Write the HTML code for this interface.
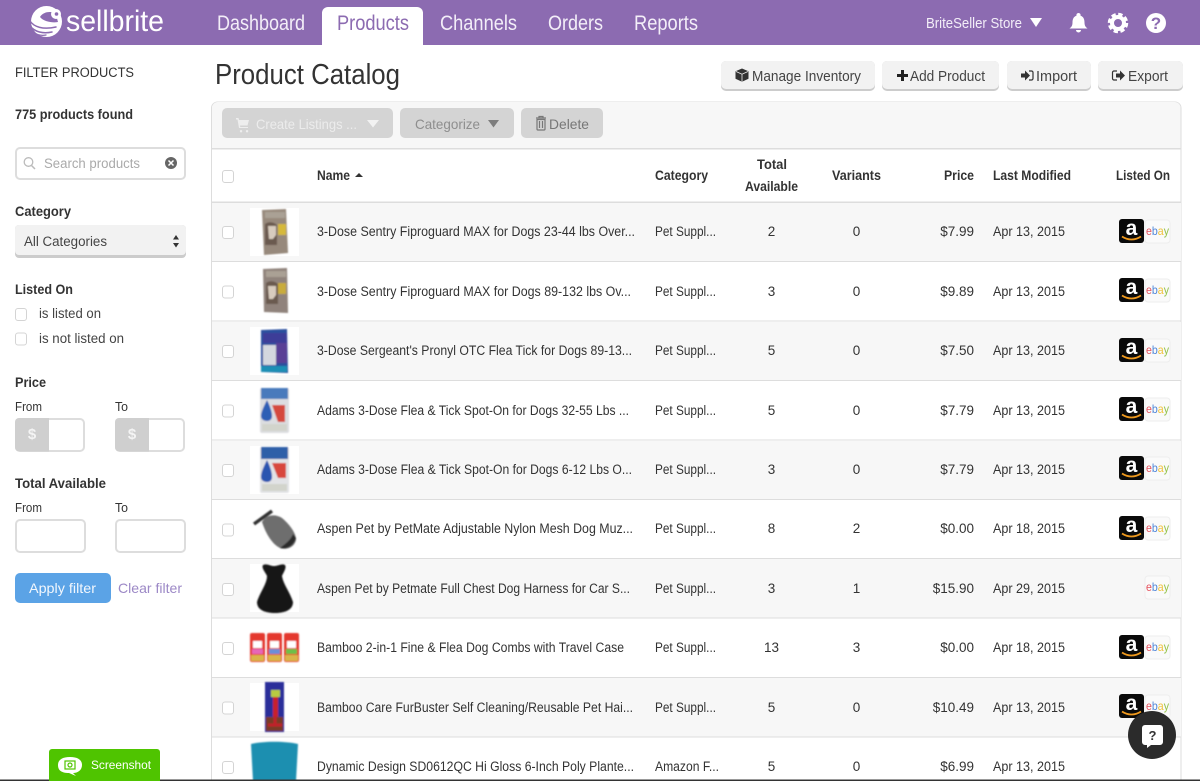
<!DOCTYPE html>
<html lang="en"><head><meta charset="utf-8"><title>Sellbrite Product Catalog</title>
<style>
html,body{margin:0;padding:0;background:#fff;width:1200px;height:781px;overflow:hidden}
svg{display:block;position:absolute;left:0;top:0;filter:blur(.3px)}
text{font-family:"Liberation Sans",sans-serif;font-size:13.5px;fill:#333}
.b{font-weight:bold}
.n{font-size:13.5px;fill:#333}
.c{text-anchor:middle}
.r{text-anchor:end}
.nav{font-size:21px;fill:#f3eef8}
.btn{font-size:14.5px;fill:#444}
</style></head><body>
<svg width="1200" height="781" viewBox="0 0 1200 781" xmlns="http://www.w3.org/2000/svg">
<defs>
<filter id="bl" x="-10%" y="-10%" width="120%" height="120%"><feGaussianBlur stdDeviation="0.7"/></filter>
<g id="az"><rect x="0" y="0" width="25" height="24" rx="3" fill="#0a0a0a"/><text x="12.500" y="16" style="font-size:21px;font-weight:bold;fill:#fff;text-anchor:middle">a</text><path d="M3 17.500c6 4 13 4 19 0" fill="none" stroke="#f09a1e" stroke-width="1.800"/></g>
<g id="eb"><rect x="0" y="0" width="25" height="23" rx="3" fill="#fafafa" stroke="#eee" stroke-width="1"/><text x="1" y="15" style="font-size:12px" textLength="23" lengthAdjust="spacingAndGlyphs"><tspan style="fill:#e5505c">e</tspan><tspan style="fill:#4f86d8">b</tspan><tspan style="fill:#efc23a">a</tspan><tspan style="fill:#94c24a">y</tspan></text></g>
</defs>

<rect width="1200" height="781" fill="#fff"/>
<!-- header -->
<rect width="1200" height="45" fill="#8c6bb1"/>
<circle cx="46.500" cy="21.500" r="15.500" fill="#fff"/>
<path d="M40 17c3-5 10-6 14-4c3 2 3 6 4 9c-5 1-14 0-18-5z" fill="#8c6bb1"/>
<g fill="none" stroke="#8c6bb1" stroke-linecap="round">
<path d="M30 21c4 6 13 9 26 6" stroke-width="1.500"/>
<path d="M30 26c5 6 13 8 22 6" stroke-width="1.500"/>
<path d="M33 32c4 3 8 4 13 3" stroke-width="1.300"/>
</g>
<circle cx="56" cy="14" r="5" fill="#fff"/><circle cx="56.500" cy="14" r="1.800" fill="#8c6bb1"/>
<text x="66" y="31" textLength="98" lengthAdjust="spacingAndGlyphs" style="font-size:30px;fill:#fff">sellbrite</text>
<text class="nav" x="217" y="30" textLength="88" lengthAdjust="spacingAndGlyphs">Dashboard</text>
<path d="M322 45V13a6 6 0 0 1 6-6h89a6 6 0 0 1 6 6v32z" fill="#fff"/>
<text class="nav" x="337" y="30" textLength="72" lengthAdjust="spacingAndGlyphs" style="fill:#8c6bb1">Products</text>
<text class="nav" x="440" y="30" textLength="77" lengthAdjust="spacingAndGlyphs">Channels</text>
<text class="nav" x="548" y="30" textLength="55" lengthAdjust="spacingAndGlyphs">Orders</text>
<text class="nav" x="634" y="30" textLength="64" lengthAdjust="spacingAndGlyphs">Reports</text>
<text x="926" y="28" textLength="96" lengthAdjust="spacingAndGlyphs" style="font-size:14.500px;fill:#f3eef8">BriteSeller Store</text>
<path d="M1030 18h12l-6 9z" fill="#fff"/>
<path d="M1078.500 13a2 2 0 0 1 2 2.600c3 1 4 3.800 4 6.900c0 3 1 4.500 3 6h-18c2-1.500 3-3 3-6c0-3.100 1-5.900 4-6.900a2 2 0 0 1 2-2.600zM1076 30h5a2.500 2.500 0 0 1-5 0z" fill="#fff"/>
<circle cx="1118" cy="23" r="6" fill="none" stroke="#fff" stroke-width="4"/>
<circle cx="1118" cy="23" r="8.500" fill="none" stroke="#fff" stroke-width="3.500" stroke-dasharray="4.200 2.470"/>
<circle cx="1156" cy="23" r="10" fill="#fff"/>
<text x="1156" y="29" class="c b" style="font-size:17px;fill:#8c6bb1">?</text>

<!-- sidebar -->
<text x="15" y="77" textLength="119" lengthAdjust="spacingAndGlyphs">FILTER PRODUCTS</text>
<text class="b" x="15" y="119" textLength="118" lengthAdjust="spacingAndGlyphs">775 products found</text>
<rect x="16" y="148" width="169" height="31" rx="4" fill="#fff" stroke="#ddd" stroke-width="2"/>
<circle cx="28.500" cy="162" r="4.300" fill="none" stroke="#bbb" stroke-width="1.300"/><path d="M31.500 165.500l3.500 3.500" stroke="#bbb" stroke-width="1.500"/>
<text x="44" y="168" textLength="96" lengthAdjust="spacingAndGlyphs" style="fill:#aaa">Search products</text>
<circle cx="171" cy="163" r="6" fill="#666"/><path d="M168.500 160.500l5 5m0-5l-5 5" stroke="#fff" stroke-width="1.500"/>
<text class="b" x="15" y="216" textLength="56" lengthAdjust="spacingAndGlyphs">Category</text>
<rect x="15" y="225" width="171" height="33" rx="4" fill="#ccc"/>
<rect x="15" y="225" width="171" height="30" rx="4" fill="#f2f2f2"/>
<text x="24" y="246" textLength="83" lengthAdjust="spacingAndGlyphs" style="fill:#444">All Categories</text>
<path d="M173 239.500l3-4.500 3 4.500zM173 243h6l-3 4.500z" fill="#333"/>
<text class="b" x="15" y="294" textLength="58" lengthAdjust="spacingAndGlyphs">Listed On</text>
<rect x="15.500" y="308.500" width="11" height="12" rx="2.500" fill="#fff" stroke="#d4d4d4"/>
<rect x="15.500" y="333" width="11" height="12" rx="2.500" fill="#fff" stroke="#d4d4d4"/>
<text x="39" y="318" textLength="62" lengthAdjust="spacingAndGlyphs" style="fill:#444">is listed on</text>
<text x="39" y="343" textLength="85" lengthAdjust="spacingAndGlyphs" style="fill:#444">is not listed on</text>
<text class="b" x="15" y="387" textLength="31" lengthAdjust="spacingAndGlyphs">Price</text>
<text x="15" y="411" textLength="27" lengthAdjust="spacingAndGlyphs" style="font-size:12.500px">From</text>
<text x="115" y="411" textLength="13" lengthAdjust="spacingAndGlyphs" style="font-size:12.500px">To</text>
<rect x="16" y="419" width="68" height="32" rx="4" fill="#fff" stroke="#ddd" stroke-width="2"/>
<path d="M19 418h30v33.500H19a4 4 0 0 1-4-4V422a4 4 0 0 1 4-4z" fill="#cfcfcf"/>
<text x="32" y="439" class="c" style="fill:#f4f4f4;font-size:15px;font-weight:bold">$</text>
<rect x="116" y="419" width="68" height="32" rx="4" fill="#fff" stroke="#ddd" stroke-width="2"/>
<path d="M119 418h30v33.500h-30a4 4 0 0 1-4-4V422a4 4 0 0 1 4-4z" fill="#cfcfcf"/>
<text x="132" y="439" class="c" style="fill:#f4f4f4;font-size:15px;font-weight:bold">$</text>
<text class="b" x="15" y="488" textLength="91" lengthAdjust="spacingAndGlyphs">Total Available</text>
<text x="15" y="512" textLength="27" lengthAdjust="spacingAndGlyphs" style="font-size:12.500px">From</text>
<text x="115" y="512" textLength="13" lengthAdjust="spacingAndGlyphs" style="font-size:12.500px">To</text>
<rect x="16" y="520" width="69" height="32" rx="4" fill="#fff" stroke="#ddd" stroke-width="2"/>
<rect x="116" y="520" width="69" height="32" rx="4" fill="#fff" stroke="#ddd" stroke-width="2"/>
<rect x="15" y="573" width="96" height="30" rx="5" fill="#5ba3e6"/>
<text x="29" y="593" textLength="67" lengthAdjust="spacingAndGlyphs" style="fill:#f2f7fd;font-size:14px">Apply filter</text>
<text x="118" y="593" textLength="64" lengthAdjust="spacingAndGlyphs" style="fill:#9c88c6;font-size:14px">Clear filter</text>

<!-- title + actions -->
<text x="215" y="84" textLength="185" lengthAdjust="spacingAndGlyphs" style="font-size:29px;fill:#333">Product Catalog</text>
<g>
<rect x="721" y="61" width="154" height="30" rx="5" fill="#ccc"/><rect x="721" y="61" width="154" height="28" rx="5" fill="#f2f2f2"/>
<path d="M742 68.500l6.500 2.800v7.400l-6.500 3-6.500-3v-7.400z" fill="#333"/><path d="M736 71.500l6 2.700 6-2.700M742 74.200v7.300" stroke="#f2f2f2" stroke-width=".8" fill="none"/>
<text class="btn" x="752" y="81" textLength="109" lengthAdjust="spacingAndGlyphs">Manage Inventory</text>
<rect x="882" y="61" width="117" height="30" rx="5" fill="#ccc"/><rect x="882" y="61" width="117" height="28" rx="5" fill="#f2f2f2"/>
<path d="M897 74h4v-4h3v4h4v3h-4v4h-3v-4h-4z" fill="#222"/>
<text class="btn" x="910" y="81" textLength="75" lengthAdjust="spacingAndGlyphs">Add Product</text>
<rect x="1007" y="61" width="84" height="30" rx="5" fill="#ccc"/><rect x="1007" y="61" width="84" height="28" rx="5" fill="#f2f2f2"/>
<path d="M1021 73.500h4v-3l5 5-5 5v-3h-4z" fill="#333"/><path d="M1029 71h2.500a1.500 1.500 0 0 1 1.500 1.500v6a1.500 1.500 0 0 1-1.500 1.500H1029" fill="none" stroke="#333" stroke-width="1.200"/>
<text class="btn" x="1036" y="81" textLength="41" lengthAdjust="spacingAndGlyphs">Import</text>
<rect x="1098" y="61" width="85" height="30" rx="5" fill="#ccc"/><rect x="1098" y="61" width="85" height="28" rx="5" fill="#f2f2f2"/>
<path d="M1117 71h-3a1.500 1.500 0 0 0-1.500 1.500v6a1.500 1.500 0 0 0 1.500 1.500h3" fill="none" stroke="#333" stroke-width="1.200"/><path d="M1116 73.500h4v-3l5 5-5 5v-3h-4z" fill="#333"/>
<text class="btn" x="1128" y="81" textLength="40" lengthAdjust="spacingAndGlyphs">Export</text>
</g>

<!-- panel -->
<path d="M211.500 781V108a6 6 0 0 1 6-6h957.500a6 6 0 0 1 6 6v673" fill="#fff" stroke="#ddd"/>
<path d="M212 148V108a6 6 0 0 1 6-6h957a6 6 0 0 1 5.500 6v40z" fill="#f7f7f7"/>
<rect x="212" y="148" width="969" height="1.500" fill="#ddd"/>
<rect x="222" y="108" width="171" height="30" rx="5" fill="#d4d4d4"/>
<path d="M236 118h2.500l.5 2h10l-1.500 5.500h-7.500l.3 1.500h7.700v1h-9l-1.500-8.500h-1.500zM241 130a1.200 1.200 0 1 0 .1 0zM247 130a1.200 1.200 0 1 0 .1 0z" fill="#eee"/>
<text x="256" y="129" textLength="101" lengthAdjust="spacingAndGlyphs" style="fill:#ececec;font-size:14px">Create Listings ...</text>
<path d="M367 120h12l-6 7.500z" fill="#f2f2f2"/>
<rect x="400" y="108" width="114" height="30" rx="5" fill="#d4d4d4"/>
<text x="415" y="129" textLength="65" lengthAdjust="spacingAndGlyphs" style="fill:#8e8e8e;font-size:14px">Categorize</text>
<path d="M488 120h11l-5.500 7.500z" fill="#7d7d7d"/>
<rect x="521" y="108" width="82" height="30" rx="5" fill="#d4d4d4"/>
<path d="M537 119.500h8v9.500a1 1 0 0 1-1 1h-6a1 1 0 0 1-1-1zM536 118h10M539 118v-1.500h4v1.500M539.500 121v7M542.500 121v7" fill="none" stroke="#777" stroke-width="1.200"/>
<text x="549" y="129" textLength="40" lengthAdjust="spacingAndGlyphs" style="fill:#777;font-size:14px">Delete</text>

<!-- table head -->
<rect x="222.500" y="170.500" width="11" height="12" rx="2.500" fill="#fff" stroke="#d4d4d4"/>
<text class="b" x="317" y="180" textLength="33" lengthAdjust="spacingAndGlyphs">Name</text>
<path d="M355 177l4-4 4 4z" fill="#333"/>
<text class="b" x="655" y="180" textLength="53" lengthAdjust="spacingAndGlyphs">Category</text>
<text class="b" x="757" y="169" textLength="30" lengthAdjust="spacingAndGlyphs">Total</text>
<text class="b" x="745" y="191" textLength="53" lengthAdjust="spacingAndGlyphs">Available</text>
<text class="b" x="832" y="180" textLength="49" lengthAdjust="spacingAndGlyphs">Variants</text>
<text class="b" x="944" y="180" textLength="30" lengthAdjust="spacingAndGlyphs">Price</text>
<text class="b" x="993" y="180" textLength="78" lengthAdjust="spacingAndGlyphs">Last Modified</text>
<text class="b" x="1116" y="180" textLength="54" lengthAdjust="spacingAndGlyphs">Listed On</text>

<!-- row backgrounds -->
<g fill="#f7f7f7">
<rect x="212" y="203" width="969" height="58"/>
<rect x="212" y="322" width="969" height="58"/>
<rect x="212" y="441" width="969" height="58"/>
<rect x="212" y="559" width="969" height="59"/>
<rect x="212" y="678" width="969" height="59"/>
</g>
<g fill="#ddd">
<rect x="212" y="201.500" width="969" height="1.500"/>
<rect x="212" y="261" width="969" height="1"/>
<rect x="212" y="320.500" width="969" height="1"/>
<rect x="212" y="380" width="969" height="1"/>
<rect x="212" y="439.500" width="969" height="1"/>
<rect x="212" y="499" width="969" height="1"/>
<rect x="212" y="558" width="969" height="1"/>
<rect x="212" y="617.500" width="969" height="1"/>
<rect x="212" y="677" width="969" height="1"/>
<rect x="212" y="736.500" width="969" height="1"/>
</g>

<!-- checkboxes -->
<g fill="#fff" stroke="#d4d4d4">
<rect x="222.500" y="226.500" width="11" height="12" rx="2.500"/>
<rect x="222.500" y="286" width="11" height="12" rx="2.500"/>
<rect x="222.500" y="345.500" width="11" height="12" rx="2.500"/>
<rect x="222.500" y="405" width="11" height="12" rx="2.500"/>
<rect x="222.500" y="464.500" width="11" height="12" rx="2.500"/>
<rect x="222.500" y="524" width="11" height="12" rx="2.500"/>
<rect x="222.500" y="583.500" width="11" height="12" rx="2.500"/>
<rect x="222.500" y="642.500" width="11" height="12" rx="2.500"/>
<rect x="222.500" y="702" width="11" height="12" rx="2.500"/>
<rect x="222.500" y="761.500" width="11" height="12" rx="2.500"/>
</g>

<!-- thumbs -->
<g fill="#fff">
<rect x="250" y="208" width="49" height="48"/><rect x="250" y="267" width="49" height="48"/><rect x="250" y="327" width="49" height="48"/><rect x="250" y="386" width="49" height="48"/><rect x="250" y="446" width="49" height="48"/><rect x="250" y="505" width="49" height="48"/><rect x="250" y="564" width="49" height="48"/><rect x="250" y="624" width="49" height="48"/><rect x="250" y="683" width="49" height="48"/>
</g>
<g filter="url(#bl)">
<g><path d="M262 210l24-1 2 44-24 2z" fill="#97897c"/><path d="M265 224c4-3 9-2 12 1v20h-12z" fill="#6a5a50"/><path d="M268 226h8v9l-3 4h-4z" fill="#d8ccbe"/><rect x="278" y="224" width="8" height="11" fill="#d6b93a"/><rect x="265" y="212" width="20" height="6" fill="#aaa195"/></g>
<g><path d="M263 269l24-1 1 45-24-1z" fill="#90837b"/><path d="M266 283c4-3 9-2 12 1v20h-12z" fill="#6a5a50"/><path d="M268 286h8v9l-3 4h-4z" fill="#d8ccbe"/><rect x="278" y="283" width="8" height="11" fill="#c9ac3c"/><rect x="266" y="271" width="20" height="6" fill="#aaa195"/></g>
<g><path d="M261 330l26-1 1 44-27-1z" fill="#2a4f9e"/><rect x="263" y="333" width="24" height="10" fill="#3e3c98"/><rect x="263" y="345" width="13" height="20" fill="#d4d7de"/><rect x="276" y="343" width="11" height="20" fill="#5a3f96"/><rect x="261" y="366" width="26" height="6" fill="#1d8fb5"/></g>
<g><rect x="260" y="388" width="29" height="45" rx="2" fill="#dcdde0"/><rect x="261" y="388" width="27" height="11" fill="#4a7abc"/><path d="M267 400c3 6 5 12 5 16c0 4-3 5-5 5s-6-1-6-5c0-4 3-10 6-16z" fill="#2f5fb5"/><path d="M272 405h13v17h-7z" fill="#d54a3e"/><rect x="262" y="424" width="25" height="7" fill="#d2d4cc"/></g>
<g><rect x="260" y="447" width="29" height="46" rx="2" fill="#e2e3e6"/><rect x="261" y="447" width="27" height="12" fill="#2e5fa8"/><path d="M267 460c3 6 5 12 5 17c0 4-3 5-5 5s-6-1-6-5c0-5 3-11 6-17z" fill="#2a55b0"/><path d="M272 463h14v15h-8z" fill="#d8473c"/><rect x="262" y="484" width="25" height="7" fill="#d2d4cc"/></g>
<g><path d="M254 524L272 511" stroke="#333" stroke-width="3.500" fill="none"/><path d="M262 522c4-8 14-8 20-4c6 5 14 14 14 22c-2 8-10 10-16 8c-8-4-14-14-18-26z" fill="#6e6e6e"/><path d="M280 548c6 2 14-2 16-10l-3-4c-2 6-8 10-13 14z" fill="#2a2a2a"/></g>
<path d="M263 565c4-2 7 1 11 1s8-3 11-1c2 3-2 8-3 11c1 8 8 16 11 26c0 8-8 11-18 11s-18-3-18-11c3-10 10-18 10-26c-1-3-6-8-4-11z" fill="#141414"/>
<g>
<rect x="250" y="633" width="15" height="29" rx="2" fill="#e4382f"/><rect x="267" y="633" width="15" height="29" rx="2" fill="#e4382f"/><rect x="284" y="633" width="15" height="29" rx="2" fill="#e4382f"/>
<rect x="253" y="641" width="9" height="7" fill="#fff"/><rect x="270" y="641" width="9" height="7" fill="#fff"/><rect x="287" y="641" width="9" height="7" fill="#fff"/>
<rect x="252" y="649" width="11" height="5" fill="#e668b8"/><rect x="269" y="649" width="11" height="5" fill="#6a8fd8"/><rect x="286" y="649" width="11" height="5" fill="#6cc04a"/>
<rect x="251" y="655" width="13" height="6" fill="#d9b54a"/><rect x="268" y="655" width="13" height="6" fill="#d9b54a"/><rect x="285" y="655" width="13" height="6" fill="#d9b54a"/>
</g>
<g><rect x="265" y="682" width="19" height="50" fill="#2a2f9a"/><rect x="271" y="690" width="9" height="7" fill="#b8cc40"/><rect x="273" y="697" width="5" height="20" fill="#c8242c"/><rect x="266" y="717" width="17" height="14" fill="#7a3a28"/><path d="M268 725h14M275 716v10" stroke="#c0202c" stroke-width="3"/></g>
<path d="M251 744c12-3 35-3 47 0l-2 37h-43z" fill="#1f8fb0"/>
</g>

<!-- names -->
<text class="n" x="317" y="236" textLength="318" lengthAdjust="spacingAndGlyphs">3-Dose Sentry Fiproguard MAX for Dogs 23-44 lbs Over...</text>
<text class="n" x="317" y="296" textLength="314" lengthAdjust="spacingAndGlyphs">3-Dose Sentry Fiproguard MAX for Dogs 89-132 lbs Ov...</text>
<text class="n" x="317" y="355" textLength="315" lengthAdjust="spacingAndGlyphs">3-Dose Sergeant's Pronyl OTC Flea Tick for Dogs 89-13...</text>
<text class="n" x="317" y="415" textLength="312" lengthAdjust="spacingAndGlyphs">Adams 3-Dose Flea &amp; Tick Spot-On for Dogs 32-55 Lbs ...</text>
<text class="n" x="317" y="474" textLength="315" lengthAdjust="spacingAndGlyphs">Adams 3-Dose Flea &amp; Tick Spot-On for Dogs 6-12 Lbs O...</text>
<text class="n" x="317" y="533" textLength="316" lengthAdjust="spacingAndGlyphs">Aspen Pet by PetMate Adjustable Nylon Mesh Dog Muz...</text>
<text class="n" x="317" y="593" textLength="313" lengthAdjust="spacingAndGlyphs">Aspen Pet by Petmate Full Chest Dog Harness for Car S...</text>
<text class="n" x="317" y="652" textLength="307" lengthAdjust="spacingAndGlyphs">Bamboo 2-in-1 Fine &amp; Flea Dog Combs with Travel Case</text>
<text class="n" x="317" y="712" textLength="316" lengthAdjust="spacingAndGlyphs">Bamboo Care FurBuster Self Cleaning/Reusable Pet Hai...</text>
<text class="n" x="317" y="771" textLength="317" lengthAdjust="spacingAndGlyphs">Dynamic Design SD0612QC Hi Gloss 6-Inch Poly Plante...</text>

<!-- category -->
<text class="n" x="655" y="236" textLength="61" lengthAdjust="spacingAndGlyphs">Pet Suppl...</text>
<text class="n" x="655" y="296" textLength="61" lengthAdjust="spacingAndGlyphs">Pet Suppl...</text>
<text class="n" x="655" y="355" textLength="61" lengthAdjust="spacingAndGlyphs">Pet Suppl...</text>
<text class="n" x="655" y="415" textLength="61" lengthAdjust="spacingAndGlyphs">Pet Suppl...</text>
<text class="n" x="655" y="474" textLength="61" lengthAdjust="spacingAndGlyphs">Pet Suppl...</text>
<text class="n" x="655" y="533" textLength="61" lengthAdjust="spacingAndGlyphs">Pet Suppl...</text>
<text class="n" x="655" y="593" textLength="61" lengthAdjust="spacingAndGlyphs">Pet Suppl...</text>
<text class="n" x="655" y="652" textLength="61" lengthAdjust="spacingAndGlyphs">Pet Suppl...</text>
<text class="n" x="655" y="712" textLength="61" lengthAdjust="spacingAndGlyphs">Pet Suppl...</text>
<text class="n" x="655" y="771" textLength="64" lengthAdjust="spacingAndGlyphs">Amazon F...</text>

<!-- total + variants -->
<g>
<text class="n c" x="771.500" y="236">2</text><text class="n c" x="771.500" y="296">3</text><text class="n c" x="771.500" y="355">5</text><text class="n c" x="771.500" y="415">5</text><text class="n c" x="771.500" y="474">3</text><text class="n c" x="771.500" y="533">8</text><text class="n c" x="771.500" y="593">3</text><text class="n c" x="771.500" y="652">13</text><text class="n c" x="771.500" y="712">5</text><text class="n c" x="771.500" y="771">5</text>
<text class="n c" x="856.500" y="236">0</text><text class="n c" x="856.500" y="296">0</text><text class="n c" x="856.500" y="355">0</text><text class="n c" x="856.500" y="415">0</text><text class="n c" x="856.500" y="474">0</text><text class="n c" x="856.500" y="533">2</text><text class="n c" x="856.500" y="593">1</text><text class="n c" x="856.500" y="652">3</text><text class="n c" x="856.500" y="712">0</text><text class="n c" x="856.500" y="771">0</text>
</g>
<!-- price -->
<text class="n r" x="974" y="236">$7.99</text><text class="n r" x="974" y="296">$9.89</text><text class="n r" x="974" y="355">$7.50</text><text class="n r" x="974" y="415">$7.79</text><text class="n r" x="974" y="474">$7.79</text><text class="n r" x="974" y="533">$0.00</text><text class="n r" x="974" y="593">$15.90</text><text class="n r" x="974" y="652">$0.00</text><text class="n r" x="974" y="712">$10.49</text><text class="n r" x="974" y="771">$6.99</text>
<!-- dates -->
<text class="n" x="993" y="236" textLength="72" lengthAdjust="spacingAndGlyphs">Apr 13, 2015</text>
<text class="n" x="993" y="296" textLength="72" lengthAdjust="spacingAndGlyphs">Apr 13, 2015</text>
<text class="n" x="993" y="355" textLength="72" lengthAdjust="spacingAndGlyphs">Apr 13, 2015</text>
<text class="n" x="993" y="415" textLength="72" lengthAdjust="spacingAndGlyphs">Apr 13, 2015</text>
<text class="n" x="993" y="474" textLength="72" lengthAdjust="spacingAndGlyphs">Apr 13, 2015</text>
<text class="n" x="993" y="533" textLength="72" lengthAdjust="spacingAndGlyphs">Apr 18, 2015</text>
<text class="n" x="993" y="593" textLength="72" lengthAdjust="spacingAndGlyphs">Apr 29, 2015</text>
<text class="n" x="993" y="652" textLength="72" lengthAdjust="spacingAndGlyphs">Apr 18, 2015</text>
<text class="n" x="993" y="712" textLength="72" lengthAdjust="spacingAndGlyphs">Apr 13, 2015</text>
<text class="n" x="993" y="771" textLength="72" lengthAdjust="spacingAndGlyphs">Apr 13, 2015</text>

<!-- listed on -->
<use href="#eb" x="1145" y="220"/><use href="#az" x="1119" y="219"/>
<use href="#eb" x="1145" y="279"/><use href="#az" x="1119" y="278"/>
<use href="#eb" x="1145" y="339"/><use href="#az" x="1119" y="338"/>
<use href="#eb" x="1145" y="398"/><use href="#az" x="1119" y="397"/>
<use href="#eb" x="1145" y="457"/><use href="#az" x="1119" y="456"/>
<use href="#eb" x="1145" y="517"/><use href="#az" x="1119" y="516"/>
<use href="#eb" x="1145" y="576"/>
<use href="#eb" x="1145" y="636"/><use href="#az" x="1119" y="635"/>
<use href="#eb" x="1145" y="695"/><use href="#az" x="1119" y="694"/>

<!-- bottom line -->
<rect x="0" y="779.500" width="1200" height="1.500" fill="#333"/>

<!-- screenshot -->
<path d="M49 781v-29a3 3 0 0 1 3-3h105a3 3 0 0 1 3 3v29z" fill="#4fc400"/>
<path d="M70 757c8 0 12 3 12 8s-4 8-9 8l3 3-7-3c-8 0-11-3-11-8s4-8 12-8z" fill="#fff"/>
<rect x="65" y="761" width="10" height="8" fill="none" stroke="#4fc400" stroke-width="1.200"/><circle cx="70" cy="765" r="2" fill="none" stroke="#4fc400" stroke-width="1.200"/>
<text x="91" y="769" textLength="60" lengthAdjust="spacingAndGlyphs" style="font-size:12px;fill:#fff">Screenshot</text>

<!-- chat -->
<circle cx="1152" cy="735" r="24" fill="#2b2b2b"/>
<path d="M1145 725h15a3 3 0 0 1 3 3v14a3 3 0 0 1-3 3h-9l-4 3v-3h-2a3 3 0 0 1-3-3v-14a3 3 0 0 1 3-3z" fill="#fff"/>
<text x="1152.500" y="740" class="c b" style="font-size:13px;fill:#333">?</text>
</svg>
</body></html>
